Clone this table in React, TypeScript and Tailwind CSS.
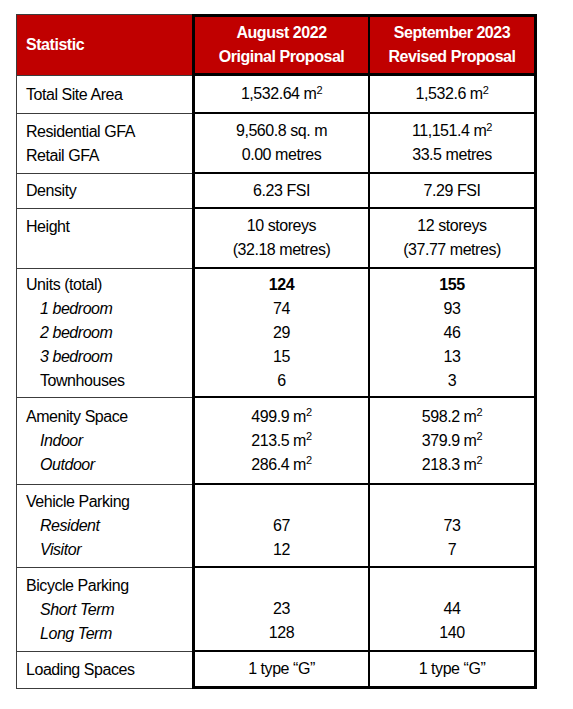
import type { ReactNode } from 'react'

type Line = { text: ReactNode; sub?: boolean; italic?: boolean }
type Row = { h: string; label: Line[]; a: ReactNode[]; b: ReactNode[] }

const m2 = (v: string) => (
  <>
    {v} m<sup className="text-[11px] -top-[0.5em]">2</sup>
  </>
)

const rows: Row[] = [
  { h: 'h-[38px]', label: [{ text: 'Total Site Area' }], a: [m2('1,532.64')], b: [m2('1,532.6')] },
  {
    h: 'h-[60px]',
    label: [{ text: 'Residential GFA' }, { text: 'Retail GFA' }],
    a: ['9,560.8 sq. m', '0.00 metres'],
    b: [m2('11,151.4'), '33.5 metres'],
  },
  { h: 'h-[35px]', label: [{ text: 'Density' }], a: ['6.23 FSI'], b: ['7.29 FSI'] },
  {
    h: 'h-[60px]',
    label: [{ text: 'Height' }, { text: '' }],
    a: ['10 storeys', '(32.18 metres)'],
    b: ['12 storeys', '(37.77 metres)'],
  },
  {
    h: 'h-[129px]',
    label: [
      { text: 'Units (total)' },
      { text: '1 bedroom', sub: true, italic: true },
      { text: '2 bedroom', sub: true, italic: true },
      { text: '3 bedroom', sub: true, italic: true },
      { text: 'Townhouses', sub: true },
    ],
    a: [<b>124</b>, '74', '29', '15', '6'],
    b: [<b>155</b>, '93', '46', '13', '3'],
  },
  {
    h: 'h-[87px]',
    label: [
      { text: 'Amenity Space' },
      { text: 'Indoor', sub: true, italic: true },
      { text: 'Outdoor', sub: true, italic: true },
    ],
    a: [m2('499.9'), m2('213.5'), m2('286.4')],
    b: [m2('598.2'), m2('379.9'), m2('218.3')],
  },
  {
    h: 'h-[83px]',
    label: [
      { text: 'Vehicle Parking' },
      { text: 'Resident', sub: true, italic: true },
      { text: 'Visitor', sub: true, italic: true },
    ],
    a: ['', '67', '12'],
    b: ['', '73', '7'],
  },
  {
    h: 'h-[84px]',
    label: [
      { text: 'Bicycle Parking' },
      { text: 'Short Term', sub: true, italic: true },
      { text: 'Long Term', sub: true, italic: true },
    ],
    a: ['', '23', '128'],
    b: ['', '44', '140'],
  },
  { h: 'h-[37px]', label: [{ text: 'Loading Spaces' }], a: ['1 type “G”'], b: ['1 type “G”'] },
]

export default function App() {
  return (
    <div className="min-h-screen bg-white pt-[14px] pl-[16px] font-['Liberation_Sans',Arial,sans-serif] text-[16px] leading-[24px] tracking-[-0.45px] text-black">
      <div className="w-[521px]">
        {/* header */}
        <div className="grid h-[62px] grid-cols-[176px_178px_167px] font-bold text-white">
          <div className="flex items-center border-t border-b border-l border-[#3c3c3c] bg-[#c00000] pl-[9px]">
            Statistic
          </div>
          <div className="flex flex-col items-center justify-center border-t-[3px] border-b-[3px] border-l-[3px] border-r-2 border-black bg-[#c00000]">
            <div>August 2022</div>
            <div>Original Proposal</div>
          </div>
          <div className="flex flex-col items-center justify-center border-t-[3px] border-b-[3px] border-r-[3px] border-black bg-[#c00000]">
            <div>September 2023</div>
            <div>Revised Proposal</div>
          </div>
        </div>

        {rows.map((row, i) => {
          const last = i === rows.length - 1
          return (
            <div key={i} className={`grid grid-cols-[176px_178px_167px] ${row.h}`}>
              <div className="flex flex-col justify-center border-b border-l border-[#3c3c3c] pl-[9px]">
                {row.label.map((l, j) => (
                  <div key={j} className={`h-[24px] ${l.sub ? 'pl-[14px]' : ''} ${l.italic ? 'italic' : ''}`}>
                    {l.text}
                  </div>
                ))}
              </div>
              <div
                className={`flex flex-col items-center justify-center border-l-[3px] border-r-2 border-black ${
                  last ? 'border-b-[3px]' : 'border-b-2'
                }`}
              >
                {row.a.map((v, j) => (
                  <div key={j} className="h-[24px]">
                    {v}
                  </div>
                ))}
              </div>
              <div
                className={`flex flex-col items-center justify-center border-r-[3px] border-black ${
                  last ? 'border-b-[3px]' : 'border-b-2'
                }`}
              >
                {row.b.map((v, j) => (
                  <div key={j} className="h-[24px]">
                    {v}
                  </div>
                ))}
              </div>
            </div>
          )
        })}
      </div>
    </div>
  )
}
